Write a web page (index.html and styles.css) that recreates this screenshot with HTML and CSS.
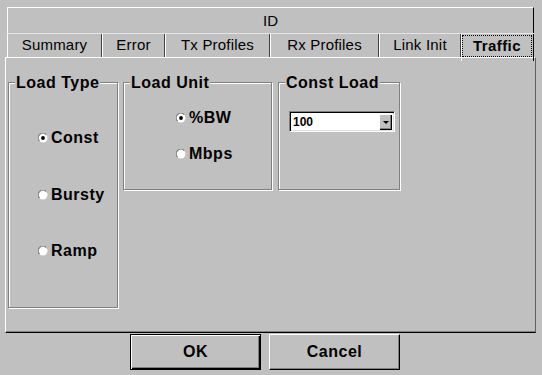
FILE: index.html
```html
<!DOCTYPE html>
<html>
<head>
<meta charset="utf-8">
<link rel="stylesheet" href="styles.css">
</head>
<body>
<svg width="0" height="0" class="defs">
  <symbol id="radio-off" viewBox="0 0 10 10">
    <circle cx="5" cy="5" r="4.5" fill="#fff"/>
    <path d="M1.6 8.2 A4.4 4.4 0 0 1 8.2 1.6" stroke="#808080" stroke-width="1.2" fill="none"/>
  </symbol>
  <symbol id="radio-on" viewBox="0 0 10 10">
    <circle cx="5" cy="5" r="4.5" fill="#fff"/>
    <path d="M1.6 8.2 A4.4 4.4 0 0 1 8.2 1.6" stroke="#808080" stroke-width="1.2" fill="none"/>
    <circle cx="5" cy="5" r="1.9" fill="#000"/>
  </symbol>
</svg>
<div class="dialog">
  <div class="title">ID</div>
  <div class="tabs">
    <div class="tab w-summary">Summary</div>
    <div class="tab w-error">Error</div>
    <div class="tab w-tx">Tx Profiles</div>
    <div class="tab w-rx">Rx Profiles</div>
    <div class="tab w-link">Link Init</div>
    <div class="tab w-traffic active"><span class="focus">Traffic</span></div>
  </div>
  <div class="panel">
    <div class="group g-type">
      <span class="legend">Load Type</span>
      <div class="radio"><svg class="rb"><use href="#radio-on"/></svg>Const</div>
      <div class="radio"><svg class="rb"><use href="#radio-off"/></svg>Bursty</div>
      <div class="radio"><svg class="rb"><use href="#radio-off"/></svg>Ramp</div>
    </div>
    <div class="group g-unit">
      <span class="legend">Load Unit</span>
      <div class="radio"><svg class="rb"><use href="#radio-on"/></svg>%BW</div>
      <div class="radio"><svg class="rb"><use href="#radio-off"/></svg>Mbps</div>
    </div>
    <div class="group g-load">
      <span class="legend">Const Load</span>
      <div class="select">
        <span class="select-text">100</span>
        <span class="select-btn"><span class="arrow"></span></span>
      </div>
    </div>
  </div>
  <div class="buttons">
    <button class="btn default">OK</button>
    <button class="btn">Cancel</button>
  </div>
</div>
</body>
</html>
```
FILE: styles.css
```css
* { box-sizing: border-box; }
body {
  margin: 0;
  width: 542px;
  height: 375px;
  overflow: hidden;
  background: #c0c0c0;
  color: #000;
  font-family: "Liberation Sans", Arial, sans-serif;
}
.defs { position: absolute; }
.dialog { padding-top: 7px; }

.title {
  margin-left: 7px;
  width: 527px;
  height: 26px;
  border-top: 1px solid #fff;
  border-left: 1px solid #fff;
  border-right: 1px solid #000;
  font-size: 15px;
  line-height: 25px;
  text-align: center;
}

.tabs {
  display: flex;
  margin-left: 7px;
  width: 527px;
  height: 24px;
  border-top: 1px solid #e4e4e4;
}
.tab {
  height: 23px;
  border-left: 1px solid #fff;
  border-right: 1px solid #404040;
  font-size: 15px;
  line-height: 22px;
  text-align: center;
  letter-spacing: 0.2px;
}
.w-summary { width: 95px; }
.w-error { width: 63px; }
.w-tx { width: 105px; }
.w-rx { width: 109px; }
.w-link { width: 82px; }
.w-traffic { width: 73px; }
.tab.active {
  border-right: 1px solid #000;
  height: 27px;
  padding: 1px 1px 0 0;
  font-weight: bold;
  position: relative;
  z-index: 1;
}
.focus {
  display: block;
  height: 22px;
  border: 1px dotted #000;
  line-height: 20px;
  letter-spacing: 0.4px;
}

.panel {
  display: flex;
  align-items: flex-start;
  margin-left: 5px;
  width: 531px;
  height: 276px;
  padding: 24px 0 0 2px;
  border-top: 1px solid #fff;
  border-left: 1px solid #fff;
  border-right: 1px solid #606060;
  border-bottom: 1px solid #000;
  box-shadow: inset 0 -1px 0 #808080;
}

.group {
  position: relative;
  border: 1px solid #808080;
  box-shadow: inset 1px 1px 0 #fff, 1px 1px 0 #fff;
  display: flex;
  flex-direction: column;
}
.legend {
  position: absolute;
  top: -8px;
  left: 6px;
  padding: 0 1px;
  background: #c0c0c0;
  font-size: 16px;
  font-weight: bold;
  line-height: 16px;
  letter-spacing: 0.5px;
}
.g-type {
  width: 110px;
  height: 226px;
  padding: 45px 0 0 29px;
  gap: 36.5px;
}
.g-unit {
  width: 149px;
  height: 108px;
  margin-left: 5px;
  padding: 25px 0 0 52px;
  gap: 16px;
}
.g-load {
  width: 122px;
  height: 108px;
  margin-left: 6px;
  padding: 28px 0 0 10px;
}

.radio {
  display: flex;
  align-items: center;
  height: 20px;
  font-size: 16px;
  font-weight: bold;
  letter-spacing: 0.5px;
}
.rb {
  width: 10px;
  height: 10px;
  margin-right: 3px;
  flex: none;
}

.select {
  display: flex;
  align-items: center;
  justify-content: space-between;
  width: 106px;
  height: 21px;
  background: #fff;
  border-top: 1px solid #808080;
  border-left: 1px solid #808080;
  border-bottom: 1px solid #fff;
  border-right: 1px solid #fff;
  box-shadow: inset 1px 1px 0 #000, inset -1px -1px 0 #dfdfdf;
}
.select-text {
  padding-left: 3px;
  font-size: 12px;
  font-weight: bold;
}
.select-btn {
  display: flex;
  align-items: center;
  justify-content: center;
  width: 13px;
  height: 16px;
  margin-right: 2px;
  background: #c0c0c0;
  box-shadow: inset 1px 1px 0 #fff, inset -1px -1px 0 #000, inset -2px -2px 0 #808080;
}
.arrow {
  width: 0;
  height: 0;
  border-left: 3px solid transparent;
  border-right: 3px solid transparent;
  border-top: 3px solid #000;
  margin-top: 1px;
}

.buttons {
  display: flex;
  gap: 8px;
  padding: 1px 0 0 130px;
}
.btn {
  width: 131px;
  height: 36px;
  padding: 0;
  background: #c0c0c0;
  color: #000;
  font-family: "Liberation Sans", Arial, sans-serif;
  font-size: 16px;
  font-weight: bold;
  letter-spacing: 0.5px;
  border: 1px solid;
  border-color: #fff #000 #000 #fff;
  box-shadow: inset -1px -1px 0 #808080;
}
.btn.default {
  border: 1px solid #000;
  box-shadow: inset 1px 1px 0 #fff, inset -1px -1px 0 #000, inset -2px -2px 0 #808080;
}
```
